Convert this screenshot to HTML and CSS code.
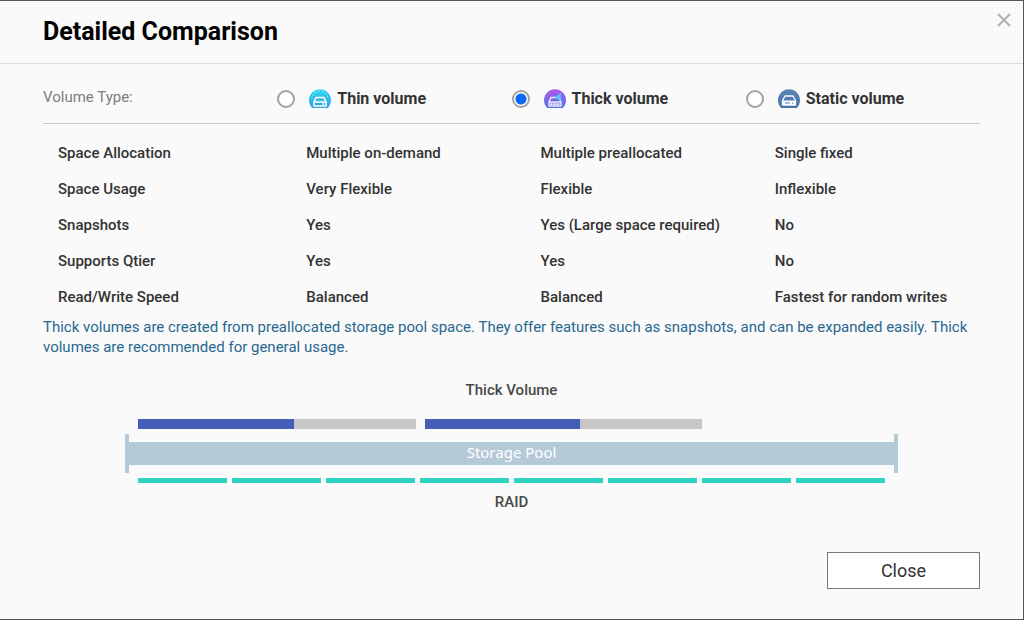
FILE: index.html
```html
<!DOCTYPE html>
<html lang="en">
<head>
<meta charset="utf-8">
<meta name="viewport" content="width=device-width, initial-scale=1">
<title>Detailed Comparison</title>
<link rel="stylesheet" href="styles.css">
</head>
<body>
<main class="dialog">
  <header class="dialog-header">
    <h1 class="dialog-title">Detailed Comparison</h1>
    <button class="dismiss" type="button" aria-label="Dismiss">
      <svg width="14" height="14" viewBox="0 0 14 14" aria-hidden="true"><path d="M1 1l12 12M13 1L1 13" fill="none" stroke="#b2b2b2" stroke-width="2"/></svg>
    </button>
  </header>

  <div class="dialog-body">
    <table class="comparison">
      <thead>
        <tr>
          <th class="type-label" scope="col">Volume Type:</th>
          <th scope="col">
            <label class="option" for="thin">
              <input class="radio" type="radio" name="volume" id="thin">
              <svg class="volume-icon" width="22" height="20" viewBox="0 0 22 20" aria-hidden="true">
                <defs><linearGradient id="thin-fill" x1="0" y1="0" x2="0" y2="1"><stop offset="0" stop-color="#2fd9f5"/><stop offset="1" stop-color="#359fdd"/></linearGradient></defs>
                <path d="M3.200 19A11 11 0 1 1 18.800 19Z" fill="url(#thin-fill)"/>
                <path d="M3 10a8 8 0 0 1 16 0" fill="none" stroke="#8ceaf8" stroke-width="1.200" stroke-dasharray="1.400 2.200"/>
                <path d="M7 8.500h8l2 4.500v4H5v-4z" fill="none" stroke="#fff" stroke-width="1.500" stroke-linejoin="round"/>
                <path d="M5 13h12M13.500 15h1.500" stroke="#fff" stroke-width="1.300"/>
              </svg>
              <span>Thin volume</span>
            </label>
          </th>
          <th scope="col">
            <label class="option" for="thick">
              <input class="radio" type="radio" name="volume" id="thick" checked>
              <svg class="volume-icon" width="22" height="20" viewBox="0 0 22 20" aria-hidden="true">
                <defs><linearGradient id="thick-fill" x1="0" y1="0" x2="0" y2="1"><stop offset="0" stop-color="#b057ee"/><stop offset="1" stop-color="#5273e5"/></linearGradient></defs>
                <path d="M3.200 19A11 11 0 1 1 18.800 19Z" fill="url(#thick-fill)"/>
                <path d="M7 8.500h8l2 4.500v4H5v-4z" fill="none" stroke="#ece6ff" stroke-width="1.400" stroke-linejoin="round"/>
                <path d="M11 8.500l6-5v5l1 5.500-3-3z" fill="#55c8ff"/>
                <path d="M5 13h12" stroke="#fff" stroke-width="1.300"/>
                <path d="M6.500 15.200h9" stroke="#fff" stroke-width="1.800" stroke-dasharray="1.800 .8"/>
              </svg>
              <span>Thick volume</span>
            </label>
          </th>
          <th scope="col">
            <label class="option" for="static">
              <input class="radio" type="radio" name="volume" id="static">
              <svg class="volume-icon" width="22" height="20" viewBox="0 0 22 20" aria-hidden="true">
                <defs><linearGradient id="static-fill" x1="0" y1="0" x2="0" y2="1"><stop offset="0" stop-color="#5c82b5"/><stop offset="1" stop-color="#4674a8"/></linearGradient></defs>
                <path d="M3.200 19A11 11 0 1 1 18.800 19Z" fill="url(#static-fill)"/>
                <path d="M7 7h8l2.500 4.500v4.500h-13v-4.500z" fill="none" stroke="#fff" stroke-width="1.300" stroke-linejoin="round"/>
                <path d="M4.500 11.500h13V16h-13z" fill="#fff"/>
                <path d="M7 14h5M14 14h1.500" stroke="#4d78ad" stroke-width="1.200"/>
              </svg>
              <span>Static volume</span>
            </label>
          </th>
        </tr>
      </thead>
      <tbody>
        <tr><th scope="row">Space Allocation</th><td>Multiple on-demand</td><td>Multiple preallocated</td><td>Single fixed</td></tr>
        <tr><th scope="row">Space Usage</th><td>Very Flexible</td><td>Flexible</td><td>Inflexible</td></tr>
        <tr><th scope="row">Snapshots</th><td>Yes</td><td>Yes (Large space required)</td><td>No</td></tr>
        <tr><th scope="row">Supports Qtier</th><td>Yes</td><td>Yes</td><td>No</td></tr>
        <tr><th scope="row">Read/Write Speed</th><td>Balanced</td><td>Balanced</td><td>Fastest for random writes</td></tr>
      </tbody>
    </table>

    <p class="description">Thick volumes are created from preallocated storage pool space. They offer features such as snapshots, and can be expanded easily. Thick volumes are recommended for general usage.</p>

    <figure class="diagram">
      <figcaption class="diagram-label">Thick Volume</figcaption>
      <div class="volumes">
        <div class="volume"><div class="used"></div></div>
        <div class="volume"><div class="used"></div></div>
      </div>
      <div class="pool"><div class="pool-bar">Storage Pool</div></div>
      <div class="disks">
        <span class="disk"></span><span class="disk"></span><span class="disk"></span><span class="disk"></span>
        <span class="disk"></span><span class="disk"></span><span class="disk"></span><span class="disk"></span>
      </div>
      <div class="diagram-label">RAID</div>
    </figure>
  </div>

  <footer class="dialog-footer">
    <button class="close-button" type="button">Close</button>
  </footer>
</main>
</body>
</html>
```
FILE: styles.css
```css
* {
  box-sizing: border-box;
}

body {
  margin: 0;
  background: #fafafa;
  color: #333;
  font-family: Roboto, "Liberation Sans", sans-serif;
  font-size: 15px;
  line-height: 20px;
}

.dialog {
  display: flex;
  flex-direction: column;
  min-height: 100vh;
  border: 1px solid #55555a;
  border-left: 0;
  background: #fafafa;
}

.dialog-header {
  display: flex;
  justify-content: space-between;
  align-items: flex-start;
  padding: 12px 12px 12px 43px;
  border-bottom: 1px solid #dcdcdc;
}

.dialog-title {
  margin: 0;
  color: #000;
  font-size: 25px;
  font-weight: 700;
  line-height: 38px;
}

.dismiss {
  display: flex;
  padding: 0;
  border: 0;
  background: none;
  cursor: pointer;
}

.dialog-body {
  flex: 1;
  padding: 0 43px;
}

.comparison {
  width: 100%;
  table-layout: fixed;
  border-collapse: separate;
  border-spacing: 0;
}

.comparison th,
.comparison td {
  padding: 8px 0;
  text-align: left;
  font-weight: 500;
}

.comparison thead th {
  padding: 25px 0 14px;
  border-bottom: 1px solid #c8c8c8;
}

.comparison thead .type-label {
  padding: 23px 0 16px;
  color: #7c7c7c;
  font-weight: 400;
}

.comparison tbody th {
  padding-left: 15px;
}

.comparison tbody td {
  padding-left: 29px;
}

.comparison tbody tr:first-child > * {
  padding-top: 19px;
}

.option {
  display: flex;
  align-items: center;
  font-size: 16px;
  font-weight: 700;
}

.radio {
  flex: none;
  appearance: none;
  width: 18px;
  height: 18px;
  margin: 0 14px 0 0;
  border: 2px solid #a2a2a2;
  border-radius: 50%;
  background: #fff;
}

.radio:checked {
  background: radial-gradient(circle, #0968f6 5px, #fff 6px);
}

.volume-icon {
  flex: none;
  margin-right: 6px;
}

.description {
  margin: 2px 0 0;
  color: #286790;
}

.diagram {
  margin: 23px 82px 0;
}

.diagram-label {
  color: #484848;
  font-weight: 500;
  text-align: center;
}

.volumes {
  display: grid;
  grid-template-columns: 8fr 8fr 5fr;
  gap: 9px;
  margin: 19px 13px 5px;
}

.volume {
  height: 10px;
  background: #c6c6c6;
}

.used {
  width: 56%;
  height: 100%;
  background: #455eb7;
}

.pool {
  padding: 8px 0;
  border: solid #b5cad7;
  border-width: 0 4px;
}

.pool-bar {
  padding-bottom: 3px;
  background: #b5cad7;
  color: #fff;
  font-family: "Noto Sans", sans-serif;
  line-height: 20px;
  text-align: center;
}

.disks {
  display: grid;
  grid-template-columns: repeat(8, 1fr);
  gap: 5px;
  margin: 5px 13px 9px;
}

.disk {
  height: 5px;
  background: #30d2c2;
}

.dialog-footer {
  display: flex;
  justify-content: flex-end;
  padding: 20px 43px 30px;
}

.close-button {
  width: 153px;
  height: 37px;
  border: 1px solid #777;
  background: #fff;
  color: #333;
  font-family: inherit;
  font-size: 18px;
  cursor: pointer;
}
```
